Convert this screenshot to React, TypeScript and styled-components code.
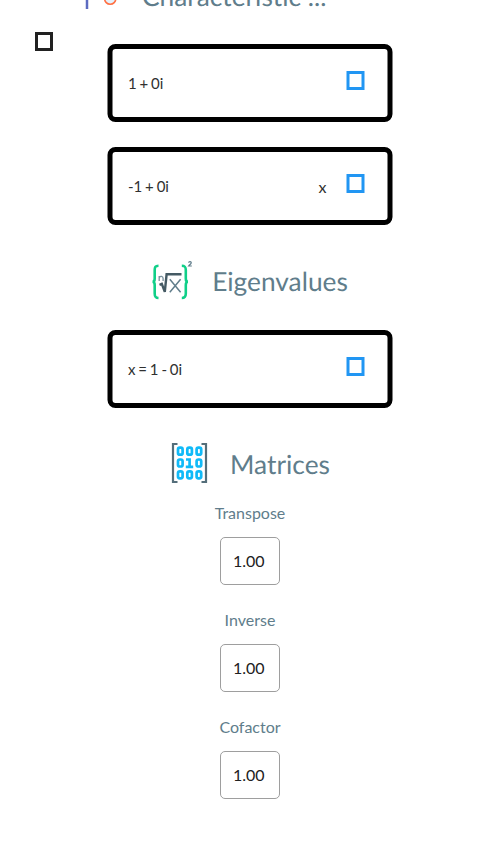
import React from "react";
import styled, { createGlobalStyle } from "styled-components";

const GlobalStyle = createGlobalStyle`
  * { box-sizing: border-box; }
  body {
    margin: 0;
    background: #fff;
    font-family: Lato, sans-serif;
    font-variant-ligatures: none;
    color: #212121;
  }
`;

const Page = styled.main`
  display: grid;
  grid-template-columns: 107.5px 285px 107.5px;
  height: 844px;
  overflow: hidden;
`;

const Side = styled.aside`
  padding: 32px 0 0 35px;
`;

const Content = styled.div`
  display: flex;
  flex-direction: column;
  align-items: center;
`;

const Heading = styled.header<{ $height: number; $gap: number; $pad?: number }>`
  display: flex;
  flex: none;
  align-items: center;
  justify-content: center;
  width: 285px;
  height: ${(p) => p.$height}px;
  gap: ${(p) => p.$gap}px;
  padding-top: ${(p) => p.$pad ?? 0}px;
`;

const TopHeading = styled.header`
  display: flex;
  flex: none;
  align-items: flex-start;
  align-self: flex-start;
  gap: 19px;
  height: 73px;
  margin: -29px 0 0 -24.5px;
`;

const Title = styled.h2<{ $down?: number }>`
  margin: 0;
  padding-top: ${(p) => p.$down ?? 0}px;
  color: #607d8b;
  font-size: 26.3px;
  line-height: 32px;
  font-weight: 400;
  white-space: nowrap;
  text-rendering: geometricPrecision;
`;

const Icon = styled.svg`
  flex: none;
  display: block;
  overflow: visible;
`;

const Card = styled.section<{ $after?: number }>`
  display: flex;
  flex: none;
  align-items: center;
  width: 285px;
  height: 78px;
  margin-bottom: ${(p) => p.$after ?? 0}px;
  padding: 0 22.5px 0 16px;
  border: 5px solid #000;
  border-radius: 8px;
  transform: translateX(-0.5px);
`;

const Expression = styled.span`
  flex: 1;
  color: #303030;
  font-size: 15px;
  line-height: 20px;
  word-spacing: -1px;
`;

const Variable = styled.span`
  margin: 2px 20px 0 0;
  color: #303030;
  font-size: 16px;
  line-height: 20px;
`;

const Box = styled.span<{ $color: string; $drop?: number }>`
  display: block;
  flex: none;
  width: 18px;
  height: 19px;
  margin-bottom: ${(p) => p.$drop ?? 0}px;
  border: 3px solid ${(p) => p.$color};
`;

const Matrix = styled.section`
  display: flex;
  flex: none;
  flex-direction: column;
  align-items: center;
  gap: 14px;
  height: 107px;
`;

const Label = styled.h3`
  margin: 0;
  color: #607d8b;
  font-size: 16px;
  line-height: 20px;
  font-weight: 400;
`;

const Cell = styled.div`
  width: 60px;
  height: 48px;
  padding-left: 12px;
  border: 1px solid #9e9e9e;
  border-radius: 5px;
  font-size: 16px;
  line-height: 46px;
`;

const PolynomialIcon = () => (
  <Icon width="40" height="40" viewBox="0 0 40 40" fill="none">
    <path d="M4 2V38" stroke="#5c6bc0" strokeWidth="2.5" />
    <circle cx="27.2" cy="27.6" r="5.6" fill="#e3f2fd" stroke="#ff7043" strokeWidth="1.6" />
    <path d="M24.5 28h5.5" stroke="#90caf9" />
  </Icon>
);

const RootIcon = () => (
  <Icon width="40" height="40" viewBox="0.5 0.5 40 40" fill="none">
    <g stroke="#10cf88" strokeWidth="2.6">
      <path d="M7 5.2C3.8 5.2 3.2 6.5 3.2 9.5V18c0 2-.6 3.3-2.2 3.3 1.6 0 2.2 1.3 2.2 3.3V33c0 3 .6 4.5 3.8 4.5" />
      <path d="M30.3 5.2c3.2 0 4 1.3 4 4.3V18c0 2 .6 3.3 2.2 3.3-1.6 0-2.2 1.3-2.2 3.3V33c0 3-.8 4.5-4 4.5" />
    </g>
    <path d="m8 24.3 2.3-1 3 8 1.8-17.5H30" stroke="#455a64" strokeWidth="2.4" />
    <path d="m18.3 18.7 10.8 13M29.1 18.7l-10.8 13" stroke="#607d8b" strokeWidth="1.5" />
    <path d="M7.7 20.5v-5M7.7 17c1.3-1.8 3.9-1.5 3.9 1v2.5" stroke="#78909c" strokeWidth="1.3" />
    <path d="M37 2.2c.4-1.6 3-1.4 2.7.2-.1 1-1.5 1.6-2.6 3.1h3.2" stroke="#607d8b" strokeWidth="1.2" />
  </Icon>
);

const MatrixIcon = () => {
  const columns = [8, 17.3, 26.6];
  const rows = [8.2, 20, 31.8];
  return (
    <Icon width="40" height="40" viewBox="0 0 40 40" fill="none">
      <path d="M7.5 1H3v38h4.5M31.5 1H36v38h-4.5" stroke="#546e7a" strokeWidth="2.2" />
      <g stroke="#10baf8" strokeWidth="2.7">
        {rows.flatMap((y, r) =>
          columns.map((x, c) =>
            r === 1 && c === 1 ? (
              <path key="one" d="M16 16.5h3.6v7.3M15.8 23.8h7.4" />
            ) : (
              <rect key={`${r}-${c}`} x={x} y={y - 3.5} width="4.6" height="7" rx="1.8" />
            )
          )
        )}
      </g>
    </Icon>
  );
};

export default function App() {
  return (
    <>
      <GlobalStyle />
      <Page>
        <Side><Box $color="#212121" /></Side>
        <Content>
          <TopHeading>
            <PolynomialIcon />
            <Title $down={9}>Characteristic ...</Title>
          </TopHeading>
          <Card $after={25}>
            <Expression>1 + 0i</Expression>
            <Box $color="#2196f3" $drop={6} />
          </Card>
          <Card>
            <Expression>-1 + 0i</Expression>
            <Variable>x</Variable>
            <Box $color="#2196f3" $drop={6} />
          </Card>
          <Heading $height={105} $gap={20} $pad={6}>
            <RootIcon />
            <Title>Eigenvalues</Title>
          </Heading>
          <Card>
            <Expression>x = 1 - 0i</Expression>
            <Box $color="#2196f3" $drop={6} />
          </Card>
          <Heading $height={95} $gap={20} $pad={15}>
            <MatrixIcon />
            <Title $down={1}>Matrices</Title>
          </Heading>
          {["Transpose", "Inverse", "Cofactor"].map((name) => (
            <Matrix key={name}>
              <Label>{name}</Label>
              <Cell>1.00</Cell>
            </Matrix>
          ))}
        </Content>
      </Page>
    </>
  );
}
